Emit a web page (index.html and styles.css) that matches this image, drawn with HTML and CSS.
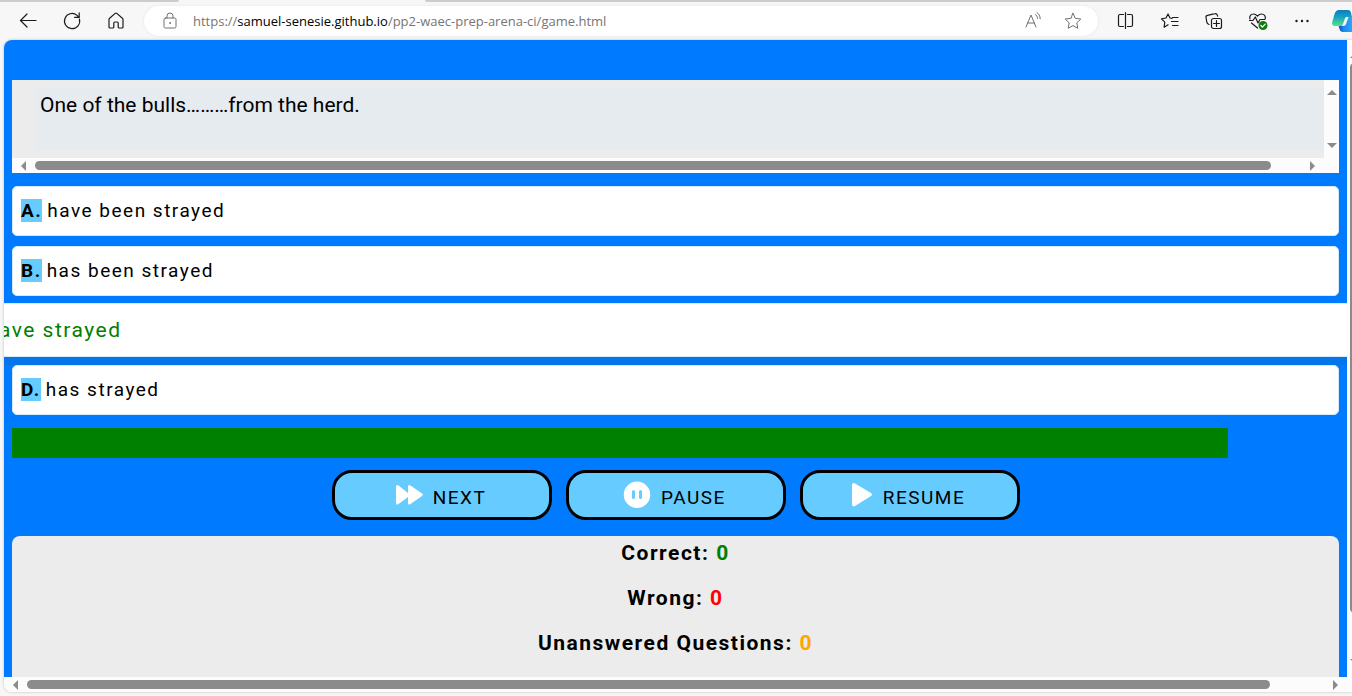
FILE: index.html
```html
<!DOCTYPE html>
<html lang="en">
<head>
<meta charset="utf-8">
<meta name="viewport" content="width=device-width, initial-scale=1">
<title>WAEC Prep Arena</title>
<link rel="stylesheet" href="styles.css">
</head>
<body class="browser">
<div class="tabs"><div class="tab-before"></div><div class="tab-active"></div><div class="tab-after"></div></div>
<header class="toolbar">
  <nav class="tools" aria-label="Navigation">
    <button class="tool" aria-label="Back"><svg class="icon" viewBox="0 0 20 20"><path d="M18 9.500H2.500M9 3L2.500 9.500 9 16"/></svg></button>
    <button class="tool" aria-label="Reload"><svg class="icon" viewBox="0 0 20 20"><path d="M17.400 8A7.600 7.600 0 1 1 14.800 4.100L17 6.200M17.200 1.800v4.600h-4.600"/></svg></button>
    <button class="tool" aria-label="Home"><svg class="icon" viewBox="0 0 20 20"><path d="M3 8.400c0-.5.2-.9.6-1.200l5.600-4.800c.5-.4 1.100-.4 1.600 0l5.600 4.800c.4.3.6.7.6 1.200V16c0 .6-.4 1-1 1h-2.800c-.6 0-1-.4-1-1v-4c0-.6-.4-1-1-1H8.800c-.6 0-1 .4-1 1v4c0 .6-.4 1-1 1H4c-.6 0-1-.4-1-1z"/></svg></button>
  </nav>
  <div class="address">
    <svg class="icon icon-muted" viewBox="0 0 20 20"><rect x="4" y="7" width="12" height="10" rx="1.500"/><path d="M7 7V5a3 3 0 0 1 6 0v2"/><circle cx="10" cy="12" r=".5"/></svg>
    <a class="url" href="#"><span>https://</span><span class="host">samuel-senesie.github.io</span><span>/pp2-waec-prep-arena-ci/game.html</span></a>
    <button class="tool tool-small" aria-label="Read aloud"><svg class="icon icon-muted" viewBox="0 0 20 20"><path d="M3 16L8 4l5 12M4.800 12h6.500M12.500 3.500c1.200.8 2 2.200 2 4M14 1.500c2 1.300 3.200 3.500 3.200 6.300"/></svg></button>
    <button class="tool tool-small" aria-label="Add to favorites"><svg class="icon icon-muted" viewBox="0 0 20 20"><path d="M10 2.300l2.300 5 5.500.7-4 3.800 1 5.500-4.800-2.700-4.800 2.700 1-5.500-4-3.800 5.500-.7z"/></svg></button>
  </div>
  <nav class="tools" aria-label="Browser tools">
    <button class="tool" aria-label="Split screen"><svg class="icon" viewBox="0 0 20 20"><path d="M7.500 3.500H4C3 3.500 2.500 4 2.500 5v9c0 1 .5 1.500 1.500 1.500h3.500M11.500 3.500H15c1 0 1.500.5 1.500 1.500v9c0 1-.5 1.500-1.500 1.500h-3.500M9.500 1.500v16"/></svg></button>
    <button class="tool" aria-label="Favorites"><svg class="icon" viewBox="0 0 20 20"><path d="M12 7.300l-2-.3-2-4-2 4-4.500.8 3.300 3.400-.7 5 4-2.400M12.500 6.500H18M11.500 10.500H18M12.500 14.500H18"/></svg></button>
    <button class="tool" aria-label="Collections"><svg class="icon" viewBox="0 0 20 20"><rect x="7.500" y="7.500" width="10" height="10" rx="2"/><path d="M12.500 9.500v6M9.500 12.500h6M5 13.500C3.800 13 3.200 12.500 2.900 11.500L2 6.500c-.2-1.200.4-2 1.500-2.200l7.500-1.600c1.200-.3 2 .4 2.300 1.400l.3 1"/></svg></button>
    <button class="tool" aria-label="Browser essentials"><svg class="icon" viewBox="0 0 20 20"><path d="M2 8C1 5 3 3 5.500 3c2 0 3 1 4 2.200 1-1.200 2-2.200 4-2.200 2.600 0 4.500 2 3.700 5M1.500 9.500H5L7.300 6l2.700 6 2-3.500h4.500M3.500 12l6 5"/><circle class="good" cx="15" cy="14.500" r="4.500"/><path class="tick" d="M12.900 14.500l1.500 1.500 2.800-2.800"/></svg></button>
    <button class="tool" aria-label="Settings and more"><svg class="icon" viewBox="0 0 20 20"><g class="dots"><circle cx="4.500" cy="10" r="1.200"/><circle cx="10" cy="10" r="1.200"/><circle cx="15.500" cy="10" r="1.200"/></g></svg></button>
    <button class="tool copilot" aria-label="Copilot"><svg class="copilot-icon" viewBox="0 0 26 22"><defs><linearGradient id="cool" x1="0" y1="0" x2="0" y2="1"><stop offset="0" stop-color="#0c7cc4"/><stop offset=".45" stop-color="#17a5bd"/><stop offset="1" stop-color="#5be08a"/></linearGradient><linearGradient id="deep" x1="0" y1="0" x2="1" y2="0"><stop offset="0" stop-color="#1238b8"/><stop offset=".3" stop-color="#1a8af0"/><stop offset="1" stop-color="#39b8ff"/></linearGradient></defs><path fill="url(#deep)" d="M6 15h5l4-8h7c2 0 4 1 3 4l-2 8c-.6 2-2 3-4 3H11c-4 0-3-4-5-7z"/><path fill="url(#cool)" d="M7 0h9c3 0 3 3 4 7h-4c-2 0-2 2-3 4-1 3-2 5-5 5H3c-2 0-3-1-3-3L2.500 4C3.300 2 4.500 0 7 0z"/><path fill="#f7f7f7" d="M14 7h2.500L14 14c-.5 1.500-1.500 2-3 2H9.500c2-1 2.500-7 4.500-9z"/></svg></button>
  </nav>
</header>
<div class="window">
  <div class="row">
    <main class="page">
      <section class="question">
        <div class="question-row">
          <div class="question-pane"><p class="question-text">One of the bulls………from the herd.</p></div>
          <div class="vbar"><i class="arrow up"></i><i class="arrow down"></i></div>
        </div>
        <div class="hbar"><i class="arrow left"></i><i class="thumb"></i><i class="arrow right"></i></div>
      </section>
      <section class="answers">
        <button class="answer"><b class="letter">A.</b><span>have been strayed</span></button>
        <button class="answer"><b class="letter">B.</b><span>has been strayed</span></button>
        <button class="answer answer-correct"><b>C.</b><span>have strayed</span></button>
        <button class="answer"><b class="letter">D.</b><span>has strayed</span></button>
      </section>
      <div class="timer"><div class="timer-fill"></div></div>
      <div class="controls">
        <button class="control"><svg class="control-icon" viewBox="0 0 28 28"><path d="M1 6q0-3 2.500-1.500L13 12V6q0-3 2.500-1.500l11.500 8q1.500 1 0 2.500l-11.500 8Q13 24.500 13 22v-6l-9.500 7Q1 24.500 1 22z"/></svg><span class="control-label">NEXT</span></button>
        <button class="control"><svg class="control-icon" viewBox="0 0 28 28"><path fill-rule="evenodd" d="M14 .5a13.200 13.200 0 1 0 0 26.500 13.200 13.200 0 0 0 0-26.500zM10.500 9q1.500 0 1.500 1.500v6q0 1.500-1.500 1.500T9 16.500v-6Q9 9 10.500 9zm7 0q1.500 0 1.500 1.500v6q0 1.500-1.500 1.500T16 16.500v-6Q16 9 17.500 9z"/></svg><span class="control-label">PAUSE</span></button>
        <button class="control"><svg class="control-icon control-icon-narrow" viewBox="4 0 21 28"><path d="M4 4.500Q4 1 7 2.500l16 9.500q2 1.500 0 3L7 25q-3 1.500-3-2z"/></svg><span class="control-label">RESUME</span></button>
      </div>
      <section class="scores">
        <p class="score">Correct: <span class="green">0</span></p>
        <p class="score">Wrong: <span class="red">0</span></p>
        <p class="score">Unanswered Questions: <span class="orange">0</span></p>
      </section>
    </main>
    <div class="page-vbar"><i class="arrow up"></i><i class="page-thumb"></i><i class="arrow down"></i></div>
  </div>
  <div class="hbar page-hbar"><i class="arrow left"></i><i class="thumb"></i><i class="arrow right"></i></div>
</div>
</body>
</html>
```

FILE: styles.css
```css
* { box-sizing: border-box; }
button { font: inherit; color: inherit; margin: 0; cursor: pointer; }
p { margin: 0; }

.browser {
  margin: 0;
  height: 100vh;
  display: flex;
  flex-direction: column;
  overflow: hidden;
  background: #f7f7f7;
  font-family: Roboto, "Liberation Sans", sans-serif;
}
.tabs { display: flex; height: 2px; flex: none; }
.tab-before { width: 179px; background: #ccc; border-bottom-right-radius: 2px; }
.tab-active { width: 246px; }
.tab-after { flex: 1; background: #ccc; border-bottom-left-radius: 2px; }

/* Toolbar */
.toolbar { display: flex; align-items: center; height: 38px; flex: none; padding-left: 6px; gap: 6px; }
.tools { display: flex; align-items: center; }
.tool { width: 44px; height: 30px; padding: 0; border: 0; background: none; display: flex; align-items: center; justify-content: center; flex: none; }
.tool-small { width: 40px; }
.icon { width: 20px; height: 20px; flex: none; fill: none; stroke: #1b1b1b; stroke-width: 1.2; stroke-linecap: round; stroke-linejoin: round; }
.icon-muted { stroke: #707070; stroke-width: 1; }
.dots { fill: #1b1b1b; stroke: none; }
.good { fill: #107c10; stroke: none; }
.tick { stroke: #fff; }
.copilot { width: 28px; justify-content: flex-start; padding-left: 8px; overflow: hidden; }
.copilot-icon { width: 26px; height: 22px; flex: none; }
.address {
  flex: 1;
  min-width: 0;
  height: 30px;
  display: flex;
  align-items: center;
  padding: 0 5px 0 16px;
  border-radius: 15px;
  background: #fff;
  box-shadow: 0 0 3px #e4e4e4;
}
.url { flex: 1; margin-left: 13px; font: 13px/20px "Open Sans", "Noto Sans", sans-serif; color: #757575; text-decoration: none; white-space: nowrap; overflow: hidden; }
.host { color: #000; }

/* Browser window */
.window { flex: 1; min-height: 0; margin: 0 0 4px 4px; display: flex; flex-direction: column; border-radius: 8px 0 0 8px; overflow: hidden; background: #fcfcfc; box-shadow: 0 0 3px #bbb; }
.row { flex: 1; min-height: 0; display: flex; }
.page { flex: 1; min-width: 0; overflow: hidden; padding: 40px 8px 0; background: #007bff; display: flex; flex-direction: column; }

/* Scroll bars */
.arrow { width: 0; height: 0; border: 5px solid transparent; flex: none; }
.up { border-top: 0; border-bottom-color: #8b8b8b; }
.down { border-bottom: 0; border-top-color: #8b8b8b; }
.left { border-left: 0; border-right-color: #8b8b8b; }
.right { border-right: 0; border-left-color: #8b8b8b; }
.hbar { display: flex; align-items: center; height: 15px; flex: none; padding: 0 24px 0 9px; gap: 9px; background: #fcfcfc; }
.thumb { flex: 1; height: 9px; border-radius: 5px; background: #8b8b8b; margin-right: 30px; }
.vbar { width: 15px; flex: none; display: flex; flex-direction: column; align-items: center; justify-content: space-between; padding: 10px 0; background: #fcfcfc; }
.page-vbar { width: 5px; flex: none; display: flex; flex-direction: column; padding: 13px 0 13px 3px; gap: 5px; overflow: hidden; }
.page-thumb { flex: 1; width: 9px; margin-bottom: 41px; border-radius: 5px; background: #8b8b8b; }
.page-hbar { padding: 0 14px 0 9px; }
.page-hbar .thumb { margin-right: 54px; }

/* Question */
.question { flex: none; margin-bottom: 13px; }
.question-row { display: flex; }
.question-pane { flex: 1; padding: 8px 0 8px 24px; background: #ececec; }
.question-text { min-height: 62px; padding: 4px; background: #e6ebef; font-size: 21px; line-height: 26px; }

/* Answers */
.answers { display: flex; flex-direction: column; gap: 10px; flex: none; }
.answer {
  height: 50px;
  padding: 0 8px 2px;
  display: flex;
  align-items: center;
  gap: 5px;
  border: 1px solid #d5e9fd;
  border-radius: 5px;
  background: #fff;
  color: #000;
  font-size: 19px;
  letter-spacing: 1.5px;
  white-space: nowrap;
}
.letter { background: #66ccff; line-height: 23px; }
.answer-correct { height: 54px; margin: -3px -66px -2px; color: green; font-size: 21px; padding: 0 11px; box-shadow: 0 8px 0 #0675ea; }
.answer-correct + .answer { position: relative; }

.timer { flex: none; margin: 13px 0 12px; }
.timer-fill { width: 1216px; max-width: 100%; height: 30px; background: green; }

.controls { display: flex; justify-content: center; gap: 14px; flex: none; margin-bottom: 16px; }
.control {
  width: 220px;
  height: 50px;
  padding: 0 2px 0 0;
  display: flex;
  align-items: center;
  justify-content: center;
  gap: 10px;
  border: 3px solid #000;
  border-radius: 20px;
  background: #66ccff;
  font-size: 19px;
  letter-spacing: 1.5px;
  color: #000;
}
.control-icon { width: 28px; height: 28px; fill: #fff; }
.control-icon-narrow { width: 21px; }
.control-label { padding-top: 4px; }

.scores { flex: 1; padding: 4px 0; border-radius: 8px 8px 0 0; background: #ececec; text-align: center; }
.score { font-size: 21px; line-height: 26px; margin-bottom: 19px; font-weight: 700; letter-spacing: 1.5px; }
.green { color: green; }
.red { color: red; }
.orange { color: orange; }
```
